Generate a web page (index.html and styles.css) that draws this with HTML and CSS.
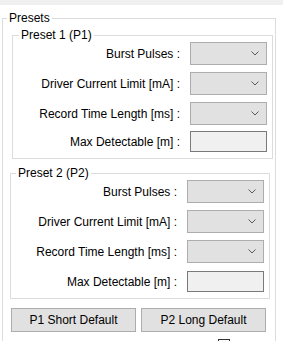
FILE: index.html
```html
<!DOCTYPE html>
<html>
<head>
<meta charset="utf-8">
<link rel="stylesheet" href="styles.css">
</head>
<body>
<div class="topbar"></div>
<fieldset class="group outer">
  <legend>Presets</legend>
  <fieldset class="group preset p1">
    <legend>Preset 1 (P1)</legend>
    <div class="row"><span class="lbl">Burst Pulses :</span><div class="combo"><svg width="8" height="5" viewBox="0 0 8 5"><polyline points="0.5,0.5 4,4 7.5,0.5" fill="none" stroke="#5a5a5a" stroke-width="1"/></svg></div></div>
    <div class="row"><span class="lbl">Driver Current Limit [mA] :</span><div class="combo"><svg width="8" height="5" viewBox="0 0 8 5"><polyline points="0.5,0.5 4,4 7.5,0.5" fill="none" stroke="#5a5a5a" stroke-width="1"/></svg></div></div>
    <div class="row pre"><span class="lbl">Record Time Length [ms] :</span><div class="combo"><svg width="8" height="5" viewBox="0 0 8 5"><polyline points="0.5,0.5 4,4 7.5,0.5" fill="none" stroke="#5a5a5a" stroke-width="1"/></svg></div></div>
    <div class="row last"><span class="lbl">Max Detectable [m] :</span><div class="textbox"></div></div>
  </fieldset>
  <fieldset class="group preset p2">
    <legend>Preset 2 (P2)</legend>
    <div class="row"><span class="lbl">Burst Pulses :</span><div class="combo"><svg width="8" height="5" viewBox="0 0 8 5"><polyline points="0.5,0.5 4,4 7.5,0.5" fill="none" stroke="#5a5a5a" stroke-width="1"/></svg></div></div>
    <div class="row"><span class="lbl">Driver Current Limit [mA] :</span><div class="combo"><svg width="8" height="5" viewBox="0 0 8 5"><polyline points="0.5,0.5 4,4 7.5,0.5" fill="none" stroke="#5a5a5a" stroke-width="1"/></svg></div></div>
    <div class="row pre"><span class="lbl">Record Time Length [ms] :</span><div class="combo"><svg width="8" height="5" viewBox="0 0 8 5"><polyline points="0.5,0.5 4,4 7.5,0.5" fill="none" stroke="#5a5a5a" stroke-width="1"/></svg></div></div>
    <div class="row last"><span class="lbl">Max Detectable [m] :</span><div class="textbox"></div></div>
  </fieldset>
  <div class="buttons">
    <button class="btn">P1 Short Default</button>
    <button class="btn">P2 Long Default</button>
  </div>
  <div class="checkrow"><span class="check"></span></div>
</fieldset>
</body>
</html>
```

FILE: styles.css
```css
html, body {
  margin: 0;
  padding: 0;
  background: #ffffff;
  overflow: hidden;
  width: 283px;
  height: 341px;
}
body {
  font-family: "Liberation Sans", Arial, sans-serif;
  font-size: 12px;
  color: #000;
}
.topbar {
  height: 5px;
  background: #f0f0f0;
}
.group {
  border: 1px solid #dcdcdc;
  margin: 0;
  min-width: 0;
}
.group > legend {
  padding: 0 2px;
  line-height: 14px;
  height: 14px;
}
.outer {
  margin: 6px 0 0 2px;
  width: 274px;
  box-sizing: border-box;
  padding: 3px 0 40px 4px;
}
.preset {
  box-sizing: border-box;
  padding: 0 5px 6px 6px;
}
.p1 {
  margin-left: 5px;
  width: 261px;
}
.p2 {
  margin: 7px 0 0 3px;
  width: 260px;
  padding-left: 5px;
  padding-bottom: 6px;
}
.row {
  display: flex;
  justify-content: flex-end;
  align-items: center;
  height: 23px;
  margin-bottom: 7px;
  gap: 10px;
}
.p1 .row.pre {
  margin-bottom: 6px;
}
.p2 .row.pre {
  margin-bottom: 8px;
}
.row.last {
  height: 21px;
  margin-bottom: 0;
}
.lbl {
  white-space: nowrap;
}
.combo {
  width: 77px;
  height: 23px;
  box-sizing: border-box;
  background: #e1e1e1;
  border: 1px solid #adadad;
  display: flex;
  align-items: center;
  justify-content: flex-end;
  padding-right: 7px;
}
.combo svg {
  display: block;
}
.textbox {
  width: 77px;
  height: 21px;
  box-sizing: border-box;
  background: #f0f0f0;
  border: 1px solid #7a7a7a;
}
.buttons {
  display: flex;
  gap: 5px;
  margin: 9px 0 0 4px;
}
.btn {
  width: 125px;
  height: 24px;
  box-sizing: border-box;
  background: #e1e1e1;
  border: 1px solid #adadad;
  border-radius: 0;
  font-family: "Liberation Sans", Arial, sans-serif;
  font-size: 12px;
  color: #000;
  padding: 0;
}
.checkrow {
  display: flex;
  padding-left: 211px;
  margin-top: 7px;
}
.check {
  width: 12px;
  height: 12px;
  box-sizing: border-box;
  border: 1px solid #333;
  background: #fff;
}
```
